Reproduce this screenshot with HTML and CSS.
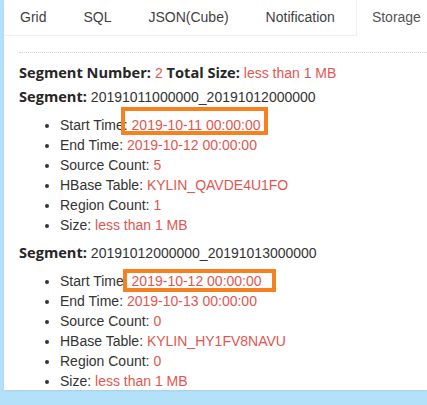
FILE: index.html
```html
<!DOCTYPE html>
<html>
<head>
<meta charset="utf-8">
<link rel="stylesheet" href="styles.css">
</head>
<body>
<div class="page">
  <ul class="tabs">
    <li class="tab">Grid</li>
    <li class="tab">SQL</li>
    <li class="tab">JSON(Cube)</li>
    <li class="tab">Notification</li>
    <li class="tab active">Storage</li>
  </ul>
  <div class="content">
    <div class="summary"><b class="label">Segment Number:</b> <span class="val">2</span> <b class="label">Total Size:</b> <span class="val">less than 1 MB</span></div>
    <div class="seg"><b class="label">Segment:</b> 20191011000000_20191012000000</div>
    <ul class="props">
      <li>Start Time: <span class="val">2019-10-11 00:00:00</span></li>
      <li>End Time: <span class="val">2019-10-12 00:00:00</span></li>
      <li>Source Count: <span class="val">5</span></li>
      <li>HBase Table: <span class="val">KYLIN_QAVDE4U1FO</span></li>
      <li>Region Count: <span class="val">1</span></li>
      <li>Size: <span class="val">less than 1 MB</span></li>
    </ul>
    <div class="seg"><b class="label">Segment:</b> 20191012000000_20191013000000</div>
    <ul class="props">
      <li>Start Time: <span class="val">2019-10-12 00:00:00</span></li>
      <li>End Time: <span class="val">2019-10-13 00:00:00</span></li>
      <li>Source Count: <span class="val">0</span></li>
      <li>HBase Table: <span class="val">KYLIN_HY1FV8NAVU</span></li>
      <li>Region Count: <span class="val">0</span></li>
      <li>Size: <span class="val">less than 1 MB</span></li>
    </ul>
  </div>
  <div class="mark mark1"></div>
  <div class="mark mark2"></div>
</div>
</body>
</html>
```
FILE: styles.css
```css
html, body {
  margin: 0;
  padding: 0;
}
body {
  background: #b4e1fa;
  font-family: "Liberation Sans", Arial, sans-serif;
  color: #333;
  width: 427px;
  height: 405px;
  overflow: hidden;
}
.page {
  position: relative;
  margin-left: 4px;
  background: #fff;
  height: 390px;
  box-shadow: 0 1px 2px rgba(0,0,0,0.08);
}
.tabs {
  list-style: none;
  margin: 0;
  padding: 0;
  display: flex;
  gap: 5px;
  height: 35px;
  border-bottom: 1px solid #eeeeee;
}
.tab {
  padding: 0 16px;
  font-size: 14px;
  line-height: 35px;
  color: #3f3f3f;
}
.tab.active {
  background: #fff;
  border-left: 1px solid #eeeeee;
  padding-left: 15px;
  height: 36px;
  color: #555;
}
.content {
  margin: 16px 0 0 15px;
  border-top: 1px dotted #d4d4d4;
  padding-top: 10px;
}
.summary, .seg {
  font-size: 14px;
  line-height: 20px;
  height: 20px;
  color: #333;
  white-space: nowrap;
}
.seg {
  margin-top: 4px;
}
.props + .seg {
  margin-top: 8px;
}
.label {
  font-family: "Open Sans", "Liberation Sans", sans-serif;
  font-weight: 700;
  font-size: 14.6px;
  line-height: 1;
  color: #262626;
}
.val {
  color: #e3564f;
}
.props {
  margin: 8px 0 0;
  padding-left: 41px;
  font-size: 14px;
  line-height: 20px;
  color: #333;
}
.props li {
  height: 20px;
  white-space: nowrap;
}
.mark {
  position: absolute;
  border: 4px solid #f7801f;
  box-sizing: border-box;
}
.mark1 {
  left: 117px;
  top: 107px;
  width: 147px;
  height: 28px;
}
.mark2 {
  left: 119px;
  top: 269px;
  width: 153px;
  height: 23px;
}
```
